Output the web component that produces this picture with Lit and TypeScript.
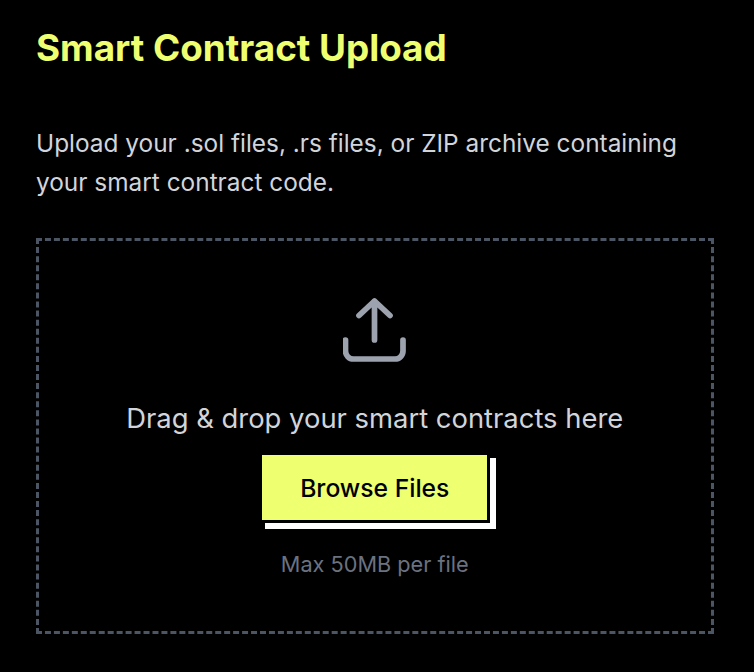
import { LitElement, html, css } from "lit";
import { customElement } from "lit/decorators.js";

@customElement("app-root")
export class AppRoot extends LitElement {
  static styles = css`
    :host { display: block; background: #000; min-height: 672px; font-family: Inter, "Liberation Sans", sans-serif; }
    .wrap { padding: 24px 40px 0 35.5px; display: flex; flex-direction: column; }
    h1 { margin: 0 0 0 0.5px; font-size: 36.85px; line-height: 48px; font-weight: 700; color: #eeff70; }
    p.desc { margin: 52px 0 0 0.5px; font-size: 24.4px; line-height: 39px; color: #d1d5db; }
    .drop { margin-top: 36px; height: 396px; box-sizing: border-box; border: 3px dashed #4b5563; display: flex; flex-direction: column; align-items: center; padding-top: 57px; }
    svg { display: block; width: 64px; height: 64px; color: #9ca3af; }
    .msg { margin-top: 38px; font-size: 27.4px; line-height: 36px; color: #d1d5db; white-space: nowrap; }
    .btn { margin-top: 16px; width: 231px; height: 71px; box-sizing: border-box; border: 3px solid #000; background: #eeff70; color: #000; font: 500 24.67px Inter, "Liberation Sans", sans-serif; box-shadow: 6px 6px 0 #fff; padding: 0; }
    .hint { margin-top: 26px; font-size: 21.7px; line-height: 30px; color: #6b7280; }
  `;
  render() {
    return html`<div class="wrap">
      <h1>Smart Contract Upload</h1>
      <p class="desc">Upload your .sol files, .rs files, or ZIP archive containing your smart contract code.</p>
      <div class="drop">
        <svg viewBox="0 0 64 64" fill="none" stroke="currentColor" stroke-width="5.7" stroke-linecap="round" stroke-linejoin="round">
          <path d="M2.5 42V53a8 8 0 0 0 8 8H52a8 8 0 0 0 8-8V42"/>
          <path d="M16 17.5L31.5 3L47 17.5M31.5 3V42"/>
        </svg>
        <div class="msg">Drag &amp; drop your smart contracts here</div>
        <button class="btn">Browse Files</button>
        <div class="hint">Max 50MB per file</div>
      </div>
    </div>`;
  }
}
